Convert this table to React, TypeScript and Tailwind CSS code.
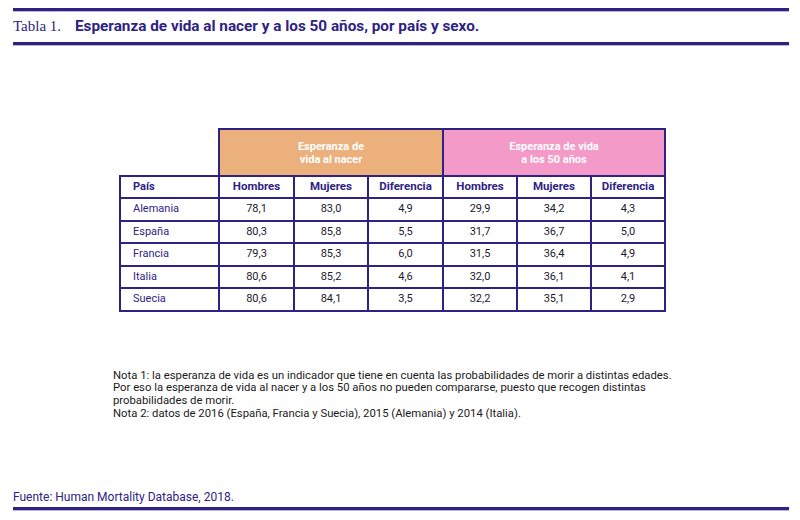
import React from 'react';

const NAVY = 'text-[#2e2383]';

const rows: [string, string, string, string, string, string, string][] = [
  ['Alemania', '78,1', '83,0', '4,9', '29,9', '34,2', '4,3'],
  ['España', '80,3', '85,8', '5,5', '31,7', '36,7', '5,0'],
  ['Francia', '79,3', '85,3', '6,0', '31,5', '36,4', '4,9'],
  ['Italia', '80,6', '85,2', '4,6', '32,0', '36,1', '4,1'],
  ['Suecia', '80,6', '84,1', '3,5', '32,2', '35,1', '2,9'],
];

const subHeads = ['Hombres', 'Mujeres', 'Diferencia', 'Hombres', 'Mujeres', 'Diferencia'];

export default function App() {
  return (
    <div
      className="w-[800px] h-[520px] bg-white flex flex-col pl-[13px] pr-[11px] pt-[8px]"
      style={{ fontFamily: 'Roboto, "Liberation Sans", sans-serif' }}
    >
      {/* Title bar */}
      <div className="h-[3px] bg-[#2e2383] shadow-[0_1px_0_#b9b3dc]" />
      <div className="h-[31px] flex items-center">
        <span
          className={`w-[62px] text-[15px] ${NAVY}`}
          style={{ fontFamily: '"Liberation Serif", serif' }}
        >
          Tabla 1.
        </span>
        <span className={`text-[15.3px] font-bold ${NAVY}`}>
          Esperanza de vida al nacer y a los 50 años, por país y sexo.
        </span>
      </div>
      <div className="h-[3px] bg-[#2e2383] shadow-[0_1px_0_#b9b3dc]" />

      {/* Table */}
      <div className="mt-[83px] ml-[106px]">
        <table className="border-collapse text-[11px] table-fixed">
          <colgroup>
            <col className="w-[99px]" />
            <col className="w-[75px]" />
            <col className="w-[74px]" />
            <col className="w-[75px]" />
            <col className="w-[74px]" />
            <col className="w-[74px]" />
            <col className="w-[74px]" />
          </colgroup>
          <thead>
            <tr className="h-[47px]">
              <th className="border-0" />
              <th
                colSpan={3}
                className="border-2 border-[#2e2383] bg-[#ebb07c] text-white font-bold leading-[13px]"
              >
                Esperanza de
                <br />
                vida al nacer
              </th>
              <th
                colSpan={3}
                className="border-2 border-[#2e2383] bg-[#f49ac8] text-white font-bold leading-[13px]"
              >
                Esperanza de vida
                <br />a los 50 años
              </th>
            </tr>
            <tr className="h-[22px]">
              <th className={`border-2 border-[#2e2383] text-left pl-[12px] font-bold ${NAVY}`}>País</th>
              {subHeads.map((h, i) => (
                <th key={i} className={`border-2 border-[#2e2383] font-bold text-[11.5px] ${NAVY}`}>
                  {h}
                </th>
              ))}
            </tr>
          </thead>
          <tbody>
            {rows.map((r) => (
              <tr key={r[0]} className="h-[22.5px]">
                <td className={`border-2 border-[#2e2383] text-left pl-[12px] ${NAVY}`}>{r[0]}</td>
                {r.slice(1).map((v, i) => (
                  <td key={i} className="border-2 border-[#2e2383] text-center text-[#1a1a2e]">
                    {v}
                  </td>
                ))}
              </tr>
            ))}
          </tbody>
        </table>
      </div>

      {/* Notes */}
      <div className="mt-[58px] ml-[100px] text-[11.3px] leading-[12.7px] text-[#1a1a1a]">
        <p>Nota 1: la esperanza de vida es un indicador que tiene en cuenta las probabilidades de morir a distintas edades.</p>
        <p>Por eso la esperanza de vida al nacer y a los 50 años no pueden compararse, puesto que recogen distintas</p>
        <p>probabilidades de morir.</p>
        <p>Nota 2: datos de 2016 (España, Francia y Suecia), 2015 (Alemania) y 2014 (Italia).</p>
      </div>

      {/* Source */}
      <div className="mt-auto mb-[10px]">
        <p className={`text-[12px] leading-[14px] ${NAVY}`}>Fuente: Human Mortality Database, 2018.</p>
        <div className="mt-[3px] h-[3px] bg-[#2e2383] shadow-[0_1px_0_#b9b3dc]" />
      </div>
    </div>
  );
}
